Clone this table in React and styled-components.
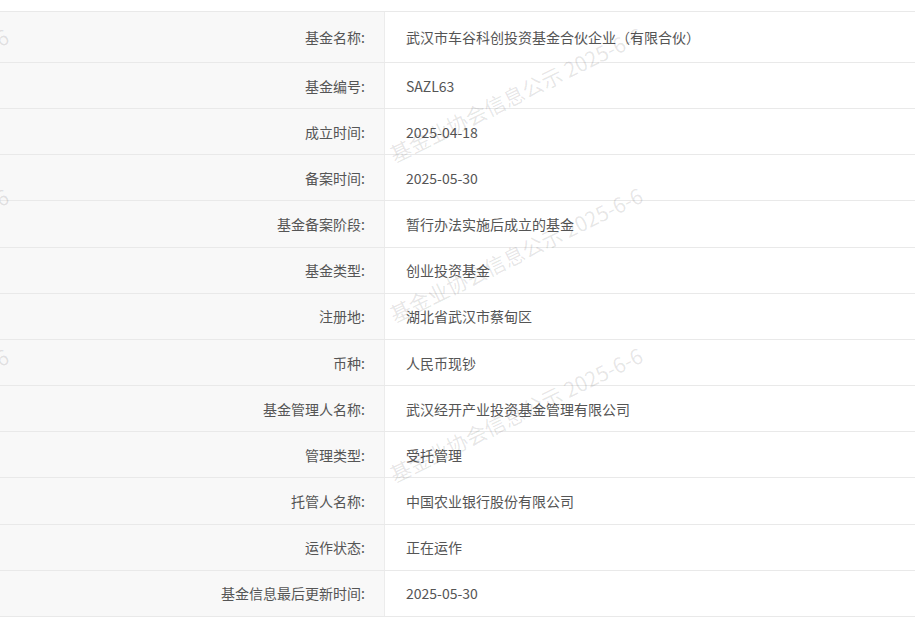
import styled, { createGlobalStyle } from "styled-components";

const GlobalStyle = createGlobalStyle`
  html, body {
    margin: 0;
    padding: 0;
    background: #fff;
  }
  body {
    font-family: "Noto Sans CJK SC", "Noto Sans", sans-serif;
    color: #555;
  }
`;

const rows = [
  ["基金名称:", "武汉市车谷科创投资基金合伙企业（有限合伙）"],
  ["基金编号:", "SAZL63"],
  ["成立时间:", "2025-04-18"],
  ["备案时间:", "2025-05-30"],
  ["基金备案阶段:", "暂行办法实施后成立的基金"],
  ["基金类型:", "创业投资基金"],
  ["注册地:", "湖北省武汉市蔡甸区"],
  ["币种:", "人民币现钞"],
  ["基金管理人名称:", "武汉经开产业投资基金管理有限公司"],
  ["管理类型:", "受托管理"],
  ["托管人名称:", "中国农业银行股份有限公司"],
  ["运作状态:", "正在运作"],
  ["基金信息最后更新时间:", "2025-05-30"],
];

// watermark anchors (bottom-left of the text), repeated across the page
const marks = [
  { x: 396, y: 166 },
  { x: 396, y: 326 },
  { x: 396, y: 486 },
  { x: -238, y: 167 },
  { x: -238, y: 327 },
  { x: -238, y: 487 },
];

const Page = () => (
  <Wrap>
    <GlobalStyle />
    <Table>
      {rows.map(([label, value], i) => (
        <Row key={label} first={i === 0}>
          <Label>{label}</Label>
          <Value>{value}</Value>
        </Row>
      ))}
    </Table>
    {marks.map((m, i) => (
      <Watermark key={i} style={{ left: m.x, top: m.y }}>
        基金业协会信息公示 2025-6-6
      </Watermark>
    ))}
  </Wrap>
);

const Wrap = styled.div`
  position: relative;
  width: 915px;
  height: 620px;
  overflow: hidden;
  padding-top: 11px;
  box-sizing: border-box;
`;

const Table = styled.div`
  display: flex;
  flex-direction: column;
  border-top: 1px solid #e9e9e9;
`;

const Row = styled.div`
  display: grid;
  grid-template-columns: 385px 1fr;
  height: ${(p) => (p.first ? "50px" : "45.17px")};
  border-bottom: 1px solid #e9e9e9;
  font-size: 14px;
`;

const Label = styled.div`
  display: flex;
  align-items: center;
  justify-content: flex-end;
  padding-right: 19px;
  background: #f8f8f8;
  border-right: 1px solid #ececec;
  color: #555;
`;

const Value = styled.div`
  display: flex;
  align-items: center;
  padding-left: 21px;
  color: #555;
`;

const Watermark = styled.div`
  position: absolute;
  transform-origin: 0 100%;
  transform: translateY(-100%) rotate(-26deg);
  font-size: 21px;
  line-height: 24px;
  white-space: nowrap;
  color: rgba(0, 0, 0, 0.1);
  pointer-events: none;
  font-family: "Noto Sans CJK SC", sans-serif;
`;

export default Page;
